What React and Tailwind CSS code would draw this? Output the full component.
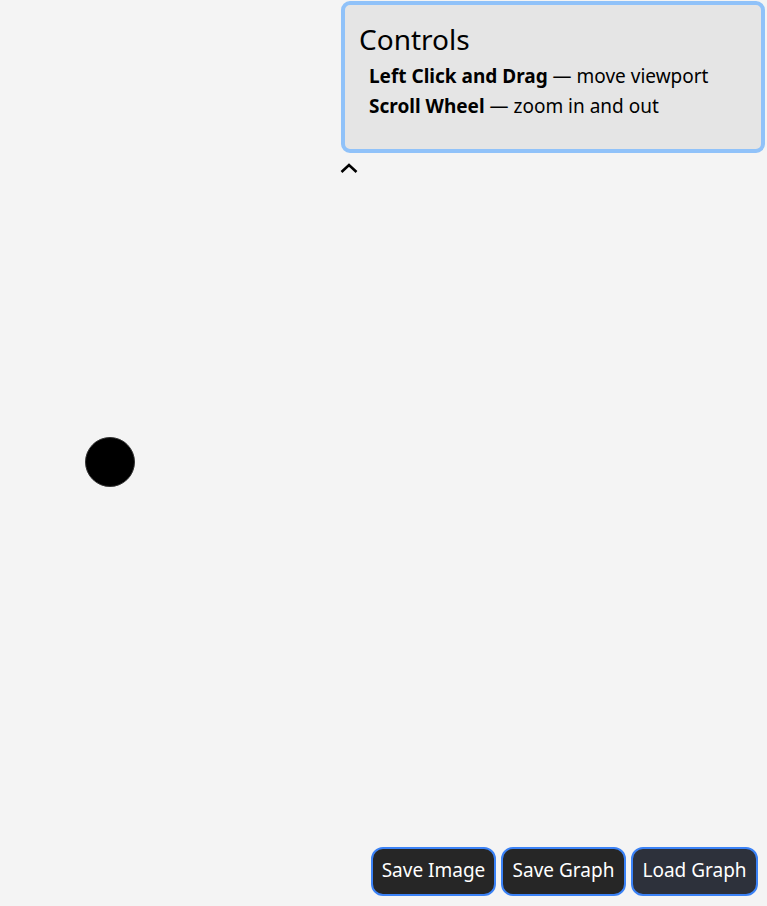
import React from "react";

const font = { fontFamily: '"Noto Sans", "Open Sans", sans-serif' };

export default function App() {
  return (
    <div
      className="relative h-screen w-full bg-[#f4f4f4] overflow-hidden flex flex-col"
      style={font}
    >
      {/* canvas node */}
      <div className="absolute left-[85px] top-[437px] w-[50px] h-[50px] rounded-full bg-black border border-[#333]" />

      <div className="flex justify-end pt-[1px] pr-[2px]">
        <div className="flex flex-col w-[424px]">
          <div className="h-[152px] bg-[#e5e5e5] border-4 border-[#90c2f9] rounded-[9px] pl-[14px] pt-[16px] text-black">
            <h2 className="text-[28px] leading-[36px] font-normal">Controls</h2>
            <ul className="pl-[10px] mt-[4px] text-[19px] leading-[30px]">
              <li>
                <span className="font-bold">Left Click and Drag</span> — move viewport
              </li>
              <li>
                <span className="font-bold">Scroll Wheel</span> — zoom in and out
              </li>
            </ul>
          </div>
          <button className="self-start mt-[8px] -ml-[2px] w-[20px] h-[14px] flex items-center justify-center">
            <svg width="20" height="12" viewBox="0 0 20 12" fill="none">
              <path d="M2.5 10 L10 3 L17.5 10" stroke="black" strokeWidth="2.6" />
            </svg>
          </button>
        </div>
      </div>

      <div className="flex-1" />

      <div className="flex justify-end gap-[5px] pr-[9px] pb-[10px]">
        <button className="h-[49px] w-[125px] rounded-[12px] border-2 border-[#3b82f6] bg-[#262626] text-white text-[19px] leading-[41px] pb-[2px]">
          Save Image
        </button>
        <button className="h-[49px] w-[125px] rounded-[12px] border-2 border-[#3b82f6] bg-[#262626] text-white text-[19px] leading-[41px] pb-[2px]">
          Save Graph
        </button>
        <button className="h-[49px] w-[127px] rounded-[12px] border-2 border-[#3b82f6] bg-[#2d313b] text-white text-[19px] leading-[41px] pb-[2px]">
          Load Graph
        </button>
      </div>
    </div>
  );
}
